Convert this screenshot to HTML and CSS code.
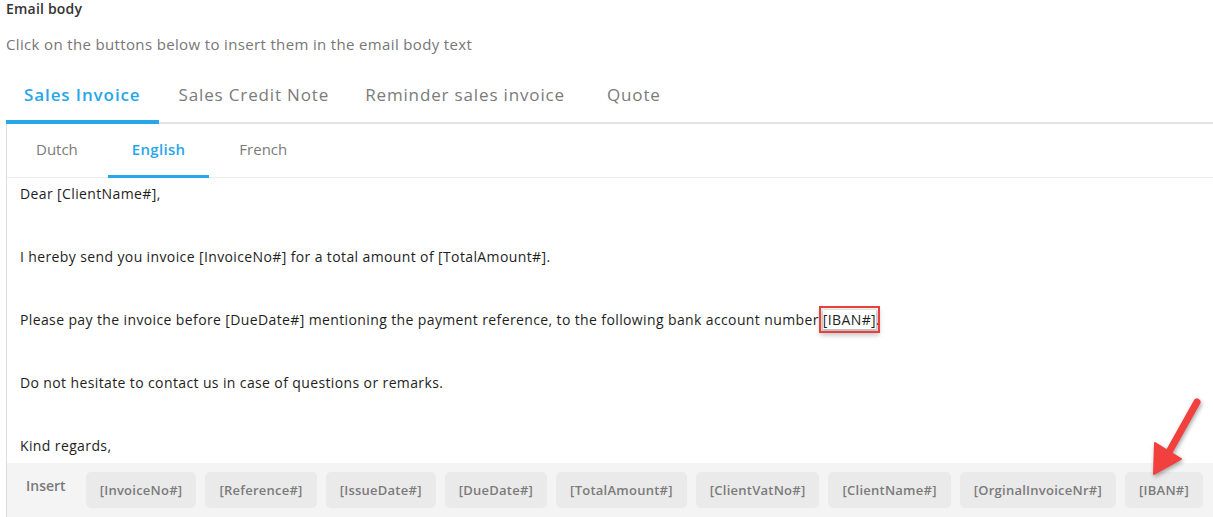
FILE: index.html
```html
<!DOCTYPE html>
<html lang="en">

<head>
    <meta charset="UTF-8">
    <meta name="viewport" content="width=device-width, initial-scale=1.0">
    <title>Email body</title>
    <link rel="stylesheet" href="styles.css">
</head>

<body>
    <h4 class="title">Email body</h4>
    <p class="hint">Click on the buttons below to insert them in the email body text</p>

    <ul class="doc-tabs">
        <li class="active">Sales Invoice</li>
        <li>Sales Credit Note</li>
        <li>Reminder sales invoice</li>
        <li>Quote</li>
    </ul>

    <div class="panel">
        <ul class="lang-tabs">
            <li>Dutch</li>
            <li class="active">English</li>
            <li>French</li>
        </ul>

        <div class="editor">
            <p>Dear [ClientName#],</p>
            <p>I hereby send you invoice [InvoiceNo#] for a total amount of [TotalAmount#].</p>
            <p>Please pay the invoice before [DueDate#] mentioning the payment reference, to the following bank account number <span class="callout">[IBAN#]</span>.</p>
            <p>Do not hesitate to contact us in case of questions or remarks.</p>
            <p>Kind regards,</p>
        </div>

        <div class="insert-bar">
            <span class="insert-label">Insert</span>
            <button type="button">[InvoiceNo#]</button>
            <button type="button">[Reference#]</button>
            <button type="button">[IssueDate#]</button>
            <button type="button">[DueDate#]</button>
            <button type="button">[TotalAmount#]</button>
            <button type="button">[ClientVatNo#]</button>
            <button type="button">[ClientName#]</button>
            <button type="button">[OrginalInvoiceNr#]</button>
            <button type="button">[IBAN#]</button>
        </div>
    </div>

    <!-- annotation arrow on top of the screenshot -->
    <svg class="arrow" width="70" height="90" viewBox="0 0 70 90">
        <g fill="#f2403f" stroke="#f2403f" stroke-linecap="round" stroke-linejoin="round">
            <line x1="53" y1="6" x2="25" y2="56" stroke-width="7" />
            <polygon points="11,47 37,63 10,78" stroke-width="2" />
        </g>
    </svg>
</body>

</html>
```

FILE: styles.css
```css
* {
    box-sizing: border-box;
}

body {
    margin: 0;
    padding: 0 0 0 6px;
    background-color: #fff;
    font-family: "Open Sans", "Lato", sans-serif;
    color: #222;
    overflow: hidden;
}

.title {
    margin: 0;
    padding-top: 0;
    font-size: 14px;
    line-height: 18px;
    font-weight: 600;
    letter-spacing: 0.2px;
    color: #333;
}

.hint {
    margin: 17px 0 0;
    font-size: 15px;
    line-height: 18px;
    letter-spacing: 0.35px;
    color: #777;
}

ul {
    list-style: none;
    margin: 0;
    padding: 0;
}

.doc-tabs {
    display: flex;
    margin-top: 17px;
    height: 54px;
    border-bottom: 2px solid #e2e2e2;
}

.doc-tabs li {
    padding: 0 18px;
    line-height: 50px;
    font-size: 17px;
    letter-spacing: 0.85px;
    color: #7b7b7b;
}

.doc-tabs li:nth-child(2) {
    margin-left: 2px;
}

.doc-tabs li:nth-child(4) {
    margin-left: 6px;
}

.doc-tabs li.active {
    color: #28a6ea;
    font-weight: 600;
    letter-spacing: 0.9px;
    border-bottom: 4px solid #28a6ea;
    margin-bottom: -2px;
}

.panel {
    border-left: 1px solid #dcdcdc;
}

.lang-tabs {
    display: flex;
    gap: 6px;
    padding-left: 5px;
    height: 54px;
    border-bottom: 1px solid #ececec;
}

.lang-tabs li {
    padding: 0 24px;
    line-height: 50px;
    font-size: 15px;
    color: #7b7b7b;
}

.lang-tabs li.active {
    color: #28a6ea;
    font-weight: 600;
    letter-spacing: 0.3px;
    border-bottom: 3px solid #28a6ea;
    margin-bottom: -1px;
}

.editor {
    padding: 0 13px;
    font-size: 14px;
    letter-spacing: 0.38px;
    color: #1e1e1e;
}

.editor p {
    margin: 0 0 31.5px;
    line-height: 31.5px;
}

.editor p:last-child {
    margin-bottom: 0;
}

.callout {
    outline: 2px solid #e8403f;
    outline-offset: 2px;
    box-shadow: 0 3px 5px 3px rgba(0, 0, 0, 0.25);
}

.insert-bar {
    display: flex;
    align-items: flex-start;
    gap: 9px;
    margin-top: 1px;
    padding: 9px 0 14px 19px;
    background-color: #f4f4f4;
}

.insert-label {
    margin-right: 11px;
    padding-top: 4px;
    font-size: 14px;
    font-weight: 600;
    color: #7a7a7a;
}

.insert-bar button {
    height: 36px;
    padding: 0 14px;
    border: none;
    border-radius: 5px;
    background-color: #eaeaea;
    font-family: inherit;
    font-size: 13px;
    font-weight: 600;
    letter-spacing: 0.25px;
    color: #7b7b7b;
    cursor: pointer;
}

.arrow {
    position: absolute;
    left: 1144px;
    top: 396px;
    filter: drop-shadow(1px 2px 2px rgba(0, 0, 0, 0.35));
}
```
